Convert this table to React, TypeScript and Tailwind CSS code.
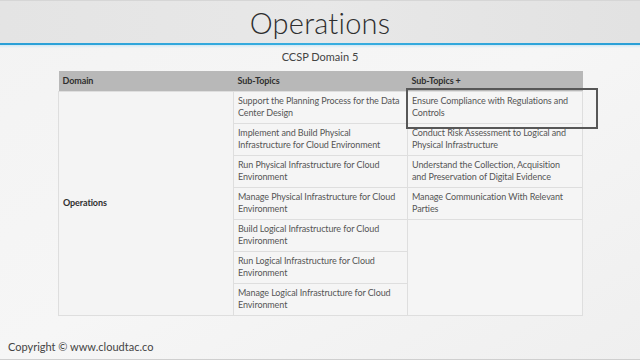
import React from 'react'

const subTopics = [
  'Support the Planning Process for the Data Center Design',
  'Implement and Build Physical Infrastructure for Cloud Environment',
  'Run Physical Infrastructure for Cloud Environment',
  'Manage Physical Infrastructure for Cloud Environment',
  'Build Logical Infrastructure for Cloud Environment',
  'Run Logical Infrastructure for Cloud Environment',
  'Manage Logical Infrastructure for Cloud Environment',
]

const subTopicsPlus = [
  'Ensure Compliance with Regulations and Controls',
  'Conduct Risk Assessment to Logical and Physical Infrastructure',
  'Understand the Collection, Acquisition and Preservation of Digital Evidence',
  'Manage Communication With Relevant Parties',
]

export default function App() {
  return (
    <div
      className="relative w-[640px] h-[360px] overflow-hidden bg-gradient-to-br from-[#f3f3f3] via-[#f6f6f6] to-[#efefef]"
      style={{ fontFamily: 'Lato, "Open Sans", sans-serif' }}
    >
      {/* Title bar */}
      <div className="h-[43px] bg-gradient-to-r from-[#e4e4e4] via-[#e8e8e8] to-[#e2e2e2] border-t border-[#d6d6d6] flex items-center justify-center">
        <h1 className="text-[29px] font-light text-[#2e2e2e] leading-none tracking-[0.2px]">Operations</h1>
      </div>
      <div className="h-[2px] bg-gradient-to-r from-[#2a9fd6] via-[#38aee0] to-[#2a9fd6]" />
      <div className="h-[3px] bg-gradient-to-b from-[#cfe8f5] to-transparent" />

      <div className="text-center text-[11px] text-[#444] leading-none mt-[3px]">CCSP Domain 5</div>

      {/* Table */}
      <div className="ml-[58px] mt-[9px] w-[524px] relative">
        <table className="w-full border-collapse table-fixed text-[9px] leading-[12px] tracking-[-0.1px]">
          <colgroup>
            <col className="w-[175px]" />
            <col className="w-[174px]" />
            <col className="w-[175px]" />
          </colgroup>
          <thead>
            <tr className="h-[20px] bg-[#b8b8b8] text-[#2f2f2f] font-bold text-left">
              <th className="px-[4px] font-bold">Domain</th>
              <th className="px-[4px] font-bold">Sub-Topics</th>
              <th className="px-[4px] font-bold">Sub-Topics +</th>
            </tr>
          </thead>
          <tbody className="text-[#555]">
            {subTopics.map((t, i) => (
              <tr key={i} className="h-[32px]">
                {i === 0 && (
                  <td rowSpan={7} className="border border-[#dedede] bg-[#f4f4f4] px-[4px] font-bold text-[#2f2f2f] align-middle">
                    Operations
                  </td>
                )}
                <td className="border border-[#dedede] bg-[#f5f5f5] pl-[4px] pr-[2px] align-middle">{t}</td>
                {i < 4 && (
                  <td className="border border-[#dedede] bg-[#f5f5f5] pl-[4px] pr-[8px] align-middle">{subTopicsPlus[i]}</td>
                )}
                {i === 4 && <td rowSpan={3} className="border border-[#dedede] bg-[#f5f5f5]" />}
              </tr>
            ))}
          </tbody>
        </table>
        {/* highlight box */}
        <div className="absolute left-[348px] top-[17px] w-[192px] h-[41px] border-2 border-[#575757]" />
      </div>

      <div className="absolute left-[8px] bottom-[8px] text-[11px] text-[#444] leading-none">
        Copyright © www.cloudtac.co
      </div>
      <div className="absolute left-0 right-0 bottom-0 h-[1px] bg-[#cfcfcf]" />
    </div>
  )
}
